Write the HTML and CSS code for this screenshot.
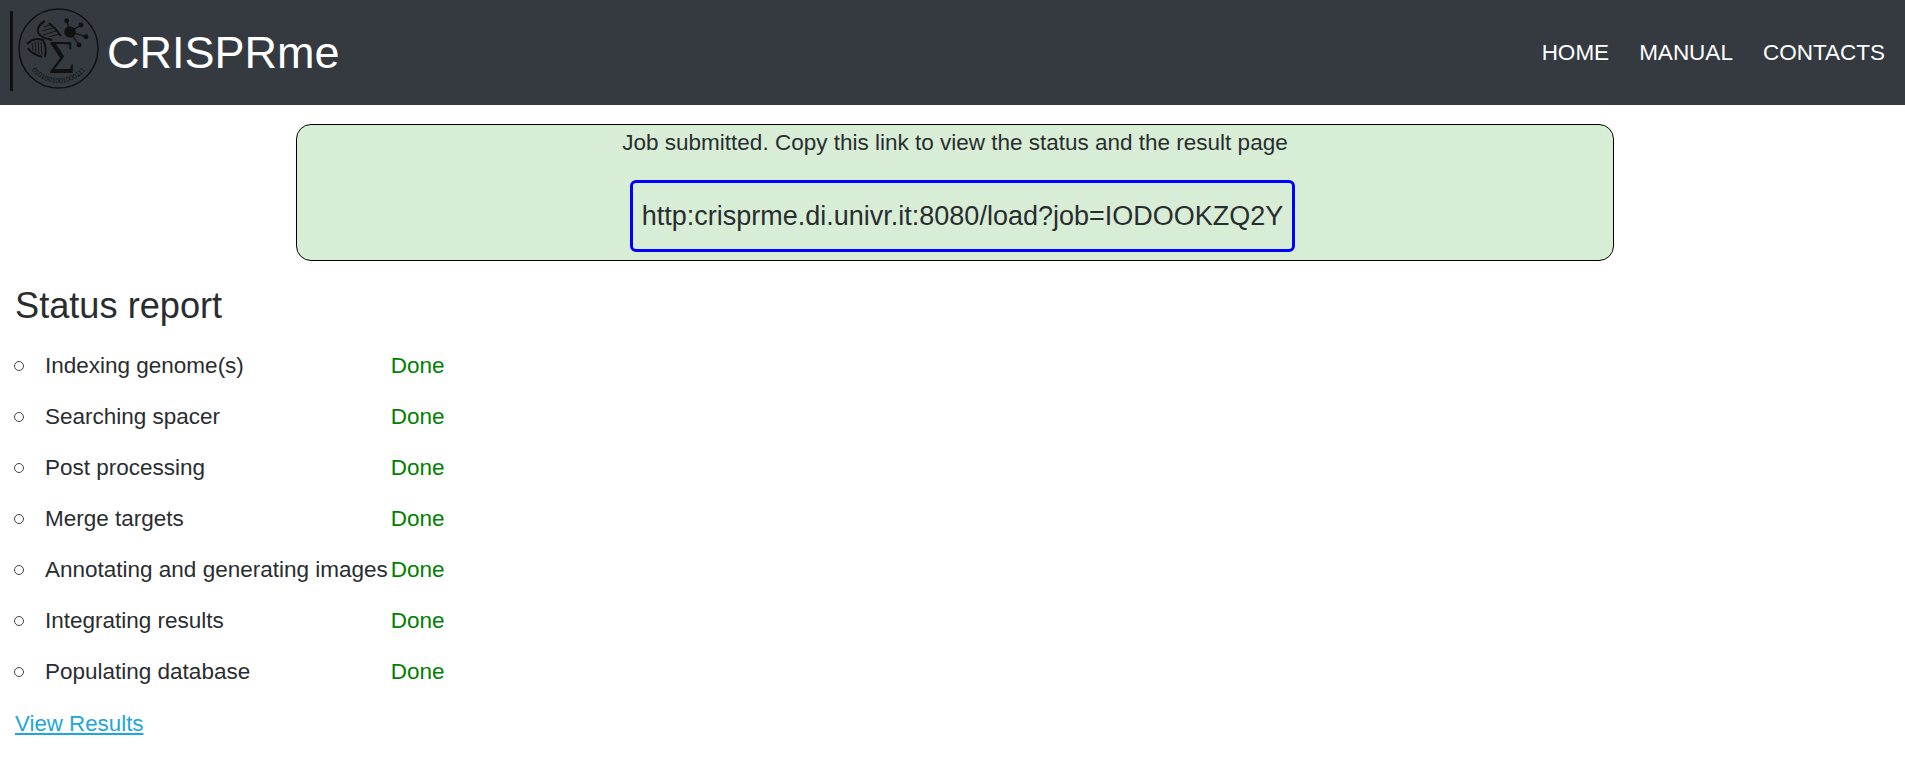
FILE: index.html
```html
<!DOCTYPE html>
<html lang="en">
<head>
<meta charset="utf-8">
<title>CRISPRme</title>
<link rel="stylesheet" href="styles.css">
</head>
<body>
<nav class="navbar">
  <a class="brand" href="#">
    <span class="brand-rule"></span>
    <svg class="logo" viewBox="0 0 81 81" width="81" height="81" aria-hidden="true">
      <defs><path id="arc" d="M7 50 A35 35 0 0 0 74 50"/></defs>
      <circle cx="40.5" cy="40.5" r="39.5" fill="none" stroke="#111" stroke-width="1.5"/>
      <g stroke="#111" stroke-width="1.3" fill="#111">
        <line x1="52" y1="24" x2="48.7" y2="12.7"/><line x1="52" y1="24" x2="63" y2="17"/>
        <line x1="52" y1="24" x2="68" y2="28.7"/><line x1="52" y1="24" x2="61" y2="37"/>
        <circle cx="48.7" cy="12.7" r="1.8"/><circle cx="63" cy="17" r="1.8"/>
        <circle cx="68" cy="28.7" r="1.8"/><circle cx="61" cy="37" r="1.8"/>
      </g>
      <circle cx="52" cy="24" r="5.8" fill="#111"/>
      <g fill="none" stroke="#111" stroke-width="2">
        <path d="M27 13 C21 16 18 22 21 26 C24 30 30 31 34 32"/>
        <path d="M31 15 C35 18 39 22 43 28"/>
        <path d="M9 36 C14 31 20 30 25 32 C28 37 28 44 27 49"/>
        <path d="M10 40 C12 44 18 47 24 49"/>
      </g>
      <g stroke="#111" stroke-width=".9">
        <line x1="26" y1="19" x2="32" y2="17"/><line x1="24" y1="23" x2="35" y2="20"/>
        <line x1="25" y1="27" x2="38" y2="23"/><line x1="31" y1="29" x2="41" y2="26"/>
        <line x1="14" y1="35" x2="15" y2="43"/><line x1="17" y1="34" x2="18" y2="45"/>
        <line x1="20" y1="33" x2="21" y2="46"/><line x1="23" y1="34" x2="24" y2="47"/>
      </g>
      <text class="sigma" x="44" y="65" text-anchor="middle">Σ</text>
      <text class="bits"><textPath href="#arc" startOffset="50%" text-anchor="middle">0101001001000111</textPath></text>
    </svg>
    <span class="brand-name">CRISPRme</span>
  </a>
  <ul class="nav-links">
    <li><a href="#">HOME</a></li>
    <li><a href="#">MANUAL</a></li>
    <li><a href="#">CONTACTS</a></li>
  </ul>
</nav>
<main class="content">
  <section class="notice">
    <p class="notice-text">Job submitted. Copy this link to view the status and the result page</p>
    <p class="job-link">http:crisprme.di.univr.it:8080/load?job=IODOOKZQ2Y</p>
  </section>
  <h2 class="title">Status report</h2>
  <ul class="status-list">
    <li class="status-row"><span class="bullet"></span><span>Indexing genome(s)</span><span class="done">Done</span></li>
    <li class="status-row"><span class="bullet"></span><span>Searching spacer</span><span class="done">Done</span></li>
    <li class="status-row"><span class="bullet"></span><span>Post processing</span><span class="done">Done</span></li>
    <li class="status-row"><span class="bullet"></span><span>Merge targets</span><span class="done">Done</span></li>
    <li class="status-row"><span class="bullet"></span><span>Annotating and generating images</span><span class="done">Done</span></li>
    <li class="status-row"><span class="bullet"></span><span>Integrating results</span><span class="done">Done</span></li>
    <li class="status-row"><span class="bullet"></span><span>Populating database</span><span class="done">Done</span></li>
  </ul>
  <a class="results" href="#">View Results</a>
</main>
</body>
</html>
```
FILE: styles.css
```css
* { box-sizing: border-box; }
html, body { margin: 0; padding: 0; }
body {
  font-family: "Liberation Sans", Arial, sans-serif;
  font-size: 22.5px;
  line-height: 1.5;
  color: #2a2d30;
  background: #fff;
}
.navbar {
  height: 105px;
  background: #343a40;
  display: flex;
  align-items: center;
  justify-content: space-between;
  padding: 0 20px 0 10px;
}
.brand { display: flex; align-items: center; color: #fff; text-decoration: none; }
.brand-rule { width: 2.5px; height: 80px; background: #111; margin: 0 5.5px 4px 0; }
.logo { display: block; flex: none; margin-bottom: 8px; }
.sigma { font-family: "Liberation Serif", serif; font-size: 46px; fill: #111; }
.bits { font-family: "Liberation Sans", sans-serif; font-size: 7px; fill: #111; }
.brand-name { font-size: 45px; line-height: 1; margin-left: 8px; }
.nav-links { display: flex; gap: 30px; list-style: none; margin: 0; padding: 0; }
.nav-links a { color: #fff; text-decoration: none; font-size: 22.5px; }
.content { padding: 19px 15px 0; }
.notice {
  width: 1318px;
  height: 137px;
  margin: 0 0 0 281px;
  background: #d8edd6;
  border: 1px solid #000;
  border-radius: 15px;
  display: flex;
  flex-direction: column;
  align-items: center;
}
.notice-text { margin: 0; line-height: 36px; }
.job-link {
  margin: 19px 0 0 15px;
  padding: 0 9px;
  height: 72px;
  line-height: 66px;
  border: 3px solid #00f;
  border-radius: 6px;
  font-size: 27px;
  white-space: nowrap;
}
.title { margin: 22px 0 0; font-size: 36.2px; font-weight: 400; line-height: 46px; }
.status-list {
  list-style: none;
  margin: 11px 0 0;
  padding: 0;
  display: table;
}
.status-row { display: table-row; height: 51px; }
.status-row > span { display: table-cell; vertical-align: middle; }
.status-row > .bullet { width: 30px; }
.bullet::before {
  content: "";
  display: block;
  width: 8px;
  height: 8px;
  margin-left: -1px;
  border: 1px solid #444;
  border-radius: 50%;
}
.done { color: green; padding-left: 3px; }
.results { display: inline-block; margin-top: 1px; color: #1ea7d8; font-size: 22.3px; line-height: 51px; }
```
